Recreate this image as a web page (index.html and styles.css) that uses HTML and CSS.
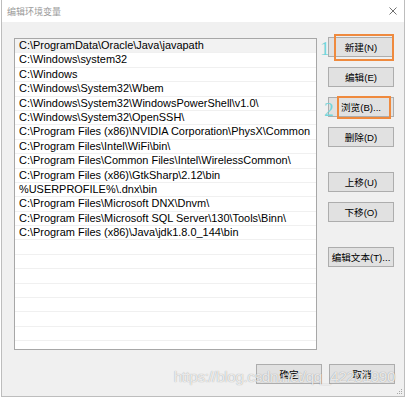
FILE: index.html
```html
<!DOCTYPE html>
<html lang="zh-CN">
  <head>
    <meta charset="UTF-8" />
    <link rel="stylesheet" href="styles.css">
  </head>
  <body>
    <div class="window">
      <div class="titlebar">
        <span class="title">编辑环境变量</span>
        <svg class="close" width="8" height="8" viewBox="0 0 8 8">
          <path d="M0.5 0.5 L7.5 7.5 M7.5 0.5 L0.5 7.5" stroke="#707070" stroke-width="1" fill="none" />
        </svg>
      </div>

      <div class="content">
        <div class="main">
          <ul class="path-list">
            <li class="selected">C:\ProgramData\Oracle\Java\javapath</li>
            <li>C:\Windows\system32</li>
            <li>C:\Windows</li>
            <li>C:\Windows\System32\Wbem</li>
            <li>C:\Windows\System32\WindowsPowerShell\v1.0\</li>
            <li>C:\Windows\System32\OpenSSH\</li>
            <li>C:\Program Files (x86)\NVIDIA Corporation\PhysX\Common</li>
            <li>C:\Program Files\Intel\WiFi\bin\</li>
            <li>C:\Program Files\Common Files\Intel\WirelessCommon\</li>
            <li>C:\Program Files (x86)\GtkSharp\2.12\bin</li>
            <li>%USERPROFILE%\.dnx\bin</li>
            <li>C:\Program Files\Microsoft DNX\Dnvm\</li>
            <li>C:\Program Files\Microsoft SQL Server\130\Tools\Binn\</li>
            <li>C:\Program Files (x86)\Java\jdk1.8.0_144\bin</li>
            <li></li>
            <li></li>
            <li></li>
            <li></li>
            <li></li>
            <li></li>
            <li></li>
            <li></li>
          </ul>

          <div class="side">
            <button class="btn">新建(N)</button>
            <button class="btn">编辑(E)</button>
            <button class="btn">浏览(B)...</button>
            <button class="btn">删除(D)</button>
            <button class="btn group-start">上移(U)</button>
            <button class="btn">下移(O)</button>
            <button class="btn group-start">编辑文本(T)...</button>
          </div>
        </div>

        <div class="footer">
          <button class="btn">确定</button>
          <button class="btn">取消</button>
        </div>
      </div>

      <!-- annotations drawn over the dialog -->
      <span class="mark mark-1">1</span>
      <span class="mark mark-2">2</span>
      <div class="hl hl-new"></div>
      <div class="hl hl-browse"></div>

      <div class="watermark">https://blog.csdn.net/qq_42201990</div>

      <svg class="grip" width="7" height="7" viewBox="0 0 7 7">
        <rect x="5" y="1" width="1" height="1" fill="#a8a8a8" />
        <rect x="3" y="3" width="1" height="1" fill="#a8a8a8" />
        <rect x="5" y="3" width="1" height="1" fill="#a8a8a8" />
        <rect x="1" y="5" width="1" height="1" fill="#a8a8a8" />
        <rect x="3" y="5" width="1" height="1" fill="#a8a8a8" />
        <rect x="5" y="5" width="1" height="1" fill="#a8a8a8" />
      </svg>
    </div>
  </body>
</html>
```

FILE: styles.css
```css
:root {
  --dialog-bg: #f0f0f0;
  --btn-bg: #e1e1e1;
  --btn-border: #adadad;
  --list-border: #a7a7a7;
  --row-line: #f0f0f0;
  --accent: #ef8a3e;
  --mark: #72d5da;
}

body {
  margin: 0;
  background: #fff;
  font-family: "Liberation Sans", "Noto Sans CJK SC", sans-serif;
  color: #000;
}

.window {
  position: relative;
  box-sizing: border-box;
  margin-left: 1px;
  width: 404px;
  height: 397px;
  border: 1px solid #bdbdbd;
  border-top: none;
  background: var(--dialog-bg);
  display: flex;
  flex-direction: column;
}

.titlebar {
  height: 22px;
  flex: none;
  background: #fff;
  display: flex;
  align-items: center;
  justify-content: space-between;
  padding: 0 6px 0 5px;
}

.title {
  font-family: "Noto Sans CJK SC", sans-serif;
  font-size: 9px;
  color: #9a9a9a;
}

.close {
  display: block;
  margin-right: 1px;
}

.content {
  flex: 1;
  padding: 15px 0 0 12px;
}

.main {
  display: flex;
}

.path-list {
  list-style: none;
  margin: 1px 0 0;
  padding: 0;
  box-sizing: border-box;
  width: 303px;
  height: 312px;
  border: 1px solid var(--list-border);
  background: #fff;
  overflow: hidden;
}

.path-list li {
  box-sizing: border-box;
  height: 14.4px;
  line-height: 13.4px;
  padding-left: 4px;
  font-size: 10.95px;
  border-bottom: 1px solid var(--row-line);
  white-space: nowrap;
}

.path-list li.selected {
  background: #f2f2f2;
}

.side {
  display: flex;
  flex-direction: column;
  gap: 10px;
  margin-left: 11px;
}

.btn {
  box-sizing: border-box;
  width: 66px;
  height: 20px;
  padding: 0;
  border: 1px solid var(--btn-border);
  background: var(--btn-bg);
  font-family: "Liberation Sans", "Noto Sans CJK SC", sans-serif;
  font-size: 9.6px;
  color: #000;
}

.side .group-start {
  margin-top: 15px;
}

.footer {
  display: flex;
  justify-content: flex-end;
  gap: 7px;
  margin-top: 14px;
  padding-right: 9px;
}

/* screenshot annotations */
.mark {
  position: absolute;
  font-family: "Liberation Serif", serif;
  font-size: 19px;
  line-height: 19px;
  color: var(--mark);
}

.mark-1 {
  left: 318px;
  top: 39px;
}

.mark-2 {
  left: 322px;
  top: 100px;
}

.hl {
  position: absolute;
  box-sizing: border-box;
  border: 2px solid var(--accent);
}

.hl-new {
  left: 332px;
  top: 34px;
  width: 60px;
  height: 27px;
}

.hl-browse {
  left: 335px;
  top: 96px;
  width: 54px;
  height: 23px;
}

.watermark {
  position: absolute;
  right: 9px;
  top: 369px;
  font-family: "Liberation Sans", sans-serif;
  font-size: 15.5px;
  line-height: 16px;
  letter-spacing: -0.5px;
  color: rgba(255, 255, 255, 0.8);
  text-shadow: 0 0 1px rgba(0, 0, 0, 0.4);
  white-space: nowrap;
}

.grip {
  position: absolute;
  right: 1px;
  bottom: 1px;
}
```
